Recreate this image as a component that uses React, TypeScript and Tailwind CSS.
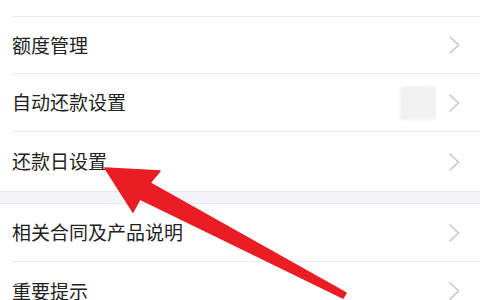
import React from "react";

const Chevron = () => (
  <svg width="12" height="20" viewBox="0 0 12 20" className="shrink-0">
    <polyline points="1.5,1.5 10.5,10 1.5,18.5" fill="none" stroke="#c8c8ca" strokeWidth="1.6" />
  </svg>
);

const Row = ({
  label,
  extra,
  border = true,
  height = "h-[58px]",
}: {
  label: string;
  extra?: React.ReactNode;
  border?: boolean;
  height?: string;
}) => (
  <div className={`flex ${height} items-center pl-3 bg-white`}>
    <div
      className={`flex h-full flex-1 items-center justify-between pr-5 ${
        border ? "border-b border-[#ebebeb]" : ""
      }`}
    >
      <span className="text-[19px] text-[#222]">{label}</span>
      <div className="flex items-center gap-3">
        {extra}
        <Chevron />
      </div>
    </div>
  </div>
);

export default function App() {
  return (
    <div
      className="relative h-[300px] w-[480px] overflow-hidden bg-white"
      style={{ fontFamily: '"Noto Sans CJK SC", "Noto Sans", sans-serif' }}
    >
      <div className="flex flex-col">
        <div className="h-[17px] pl-3">
          <div className="h-full border-b border-[#ebebeb]" />
        </div>
        <Row label="额度管理" height="h-[57px]" />
        <Row
          label="自动还款设置"
          extra={<div className="h-[34px] w-[36px] rounded-sm bg-[#f1f1f1] blur-[1px]" />}
        />
        <Row label="还款日设置" border={false} height="h-[59px]" />
        <div className="h-[13px] border-y border-[#e6e6ee] bg-[#f4f4f8]" />
        <Row label="相关合同及产品说明" height="h-[58px]" />
        <Row label="重要提示" border={false} />
      </div>
      <svg
        className="pointer-events-none absolute left-0 top-0"
        width="480"
        height="300"
        viewBox="0 0 480 300"
      >
        <polygon
          points="105,168 160,171 150,183 346,293 343,298 140,199 133,212"
          fill="#ea1c24"
          stroke="#ea1c24"
          strokeWidth="1.5"
          strokeLinejoin="round"
        />
      </svg>
    </div>
  );
}
